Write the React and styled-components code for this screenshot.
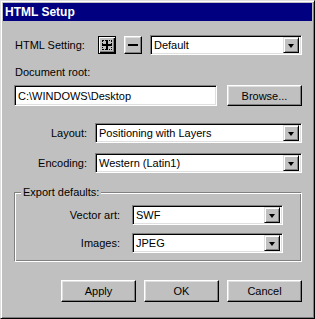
import React from "react";
import styled, { createGlobalStyle } from "styled-components";

const Global = createGlobalStyle`
  body {
    margin: 0;
    background: #c0c0c0;
  }
`;

const Window = styled.div`
  width: 315px;
  height: 319px;
  box-sizing: border-box;
  background: #c0c0c0;
  border: 1px solid;
  border-color: #dfdfdf #000 #000 #dfdfdf;
  box-shadow: inset 1px 1px #fff, inset -1px -1px #808080;
  padding: 2px;
  display: flex;
  flex-direction: column;
  font-family: "Liberation Sans", Arial, sans-serif;
  font-size: 11px;
  color: #000;
`;

const TitleBar = styled.div`
  height: 18px;
  line-height: 18px;
  background: #000080;
  color: #fff;
  font-weight: bold;
  font-size: 12px;
  padding-left: 2px;
`;

const Body = styled.div`
  display: flex;
  flex-direction: column;
  padding: 14px 10px 0 11px;
`;

const Row = styled.div`
  display: flex;
  align-items: center;
  height: ${({ h }) => h || 20}px;
  margin-top: ${({ mt }) => mt || 0}px;
`;

const Label = styled.span`
  width: ${({ w }) => w}px;
  margin-right: ${({ gap }) => gap || 0}px;
  padding-left: 1px;
  text-align: ${({ right }) => (right ? "right" : "left")};
  white-space: nowrap;
  flex-shrink: 0;
`;

const Caption = styled.div`
  margin-top: 11px;
  line-height: 13px;
  padding-left: 1px;
`;

const Sunken = styled.div`
  box-sizing: border-box;
  height: ${({ h }) => h || 20}px;
  width: ${({ w }) => (w ? `${w}px` : "auto")};
  flex: ${({ w }) => (w ? "none" : 1)};
  background: #fff;
  border: 1px solid;
  border-color: #808080 #fff #fff #808080;
  box-shadow: inset 1px 1px #000, inset -1px -1px #dfdfdf;
  padding: 2px;
  display: flex;
  align-items: center;
`;

const FieldText = styled.span`
  flex: 1;
  padding-left: 1px;
  white-space: nowrap;
  overflow: hidden;
`;

const Button = styled.button`
  box-sizing: border-box;
  width: ${({ w }) => w || 75}px;
  height: ${({ h }) => h || 22}px;
  padding: 0;
  margin-left: ${({ ml }) => ml || 0}px;
  background: #c0c0c0;
  border: 1px solid;
  border-color: #fff #000 #000 #fff;
  box-shadow: inset -1px -1px #808080, inset 1px 1px #dfdfdf;
  font-family: inherit;
  font-size: 11px;
  color: #000;
  display: flex;
  align-items: center;
  justify-content: center;
  flex-shrink: 0;
`;

const DefaultButton = styled(Button)`
  border: 1px solid #000;
  box-shadow: inset 1px 1px #fff, inset -1px -1px #000, inset -2px -2px #808080;
  position: relative;
`;

const Focus = styled.span`
  position: absolute;
  inset: 3px;
  border: 1px dotted #000;
`;

const DropButton = styled.span`
  box-sizing: border-box;
  width: 16px;
  height: 16px;
  background: #c0c0c0;
  border: 1px solid;
  border-color: #dfdfdf #000 #000 #dfdfdf;
  box-shadow: inset 1px 1px #fff, inset -1px -1px #808080;
  display: flex;
  align-items: center;
  justify-content: center;
  flex-shrink: 0;
`;

const Arrow = styled.span`
  width: 0;
  height: 0;
  border-left: 3.5px solid transparent;
  border-right: 3.5px solid transparent;
  border-top: 4px solid #000;
  margin-top: 1px;
`;

const Group = styled.div`
  position: relative;
  margin-top: 19px;
  border: 1px solid;
  border-color: #808080 #fff #fff #808080;
  box-shadow: inset 1px 1px #fff, inset -1px -1px #808080;
  padding: 12px 0 8px 0;
`;

const Legend = styled.span`
  position: absolute;
  top: -7px;
  left: 6px;
  padding: 0 2px;
  background: #c0c0c0;
  line-height: 13px;
`;

const Buttons = styled.div`
  display: flex;
  justify-content: flex-end;
  gap: 8px;
  margin-top: 18px;
`;

function Select({ value, w }) {
  return (
    <Sunken w={w}>
      <FieldText>{value}</FieldText>
      <DropButton>
        <Arrow />
      </DropButton>
    </Sunken>
  );
}

function PlusIcon() {
  return (
    <svg width="10" height="10" viewBox="0 0 10 10">
      <rect x="4" y="0" width="2" height="10" fill="#000" />
      <rect x="0" y="4" width="10" height="2" fill="#000" />
    </svg>
  );
}

function MinusIcon() {
  return (
    <svg width="10" height="10" viewBox="0 0 10 10">
      <rect x="0" y="4" width="10" height="2" fill="#000" />
    </svg>
  );
}

export default function App() {
  return (
    <>
      <Global />
      <Window>
        <TitleBar>HTML Setup</TitleBar>
        <Body>
          <Row>
            <Label w={83}>HTML Setting:</Label>
            <DefaultButton w={18} h={18}>
              <Focus />
              <PlusIcon />
            </DefaultButton>
            <Button w={18} h={18} ml={8}>
              <MinusIcon />
            </Button>
            <Row style={{ flex: 1, marginLeft: 8 }}>
              <Select value="Default" />
            </Row>
          </Row>
          <Caption>Document root:</Caption>
          <Row h={21} mt={6}>
            <Sunken w={203} h={21}>
              <FieldText>C:\WINDOWS\Desktop</FieldText>
            </Sunken>
            <Button h={21} ml={10}>
              Browse...
            </Button>
          </Row>
          <Row mt={17}>
            <Label w={72} gap={8} right>
              Layout:
            </Label>
            <Select value="Positioning with Layers" />
          </Row>
          <Row mt={10}>
            <Label w={72} gap={8} right>
              Encoding:
            </Label>
            <Select value="Western (Latin1)" />
          </Row>
          <Group>
            <Legend>Export defaults:</Legend>
            <Row>
              <Label w={104} gap={12} right>
                Vector art:
              </Label>
              <Select value="SWF" w={151} />
            </Row>
            <Row mt={8}>
              <Label w={104} gap={12} right>
                Images:
              </Label>
              <Select value="JPEG" w={151} />
            </Row>
          </Group>
          <Buttons>
            <Button>Apply</Button>
            <Button>OK</Button>
            <Button>Cancel</Button>
          </Buttons>
        </Body>
      </Window>
    </>
  );
}
